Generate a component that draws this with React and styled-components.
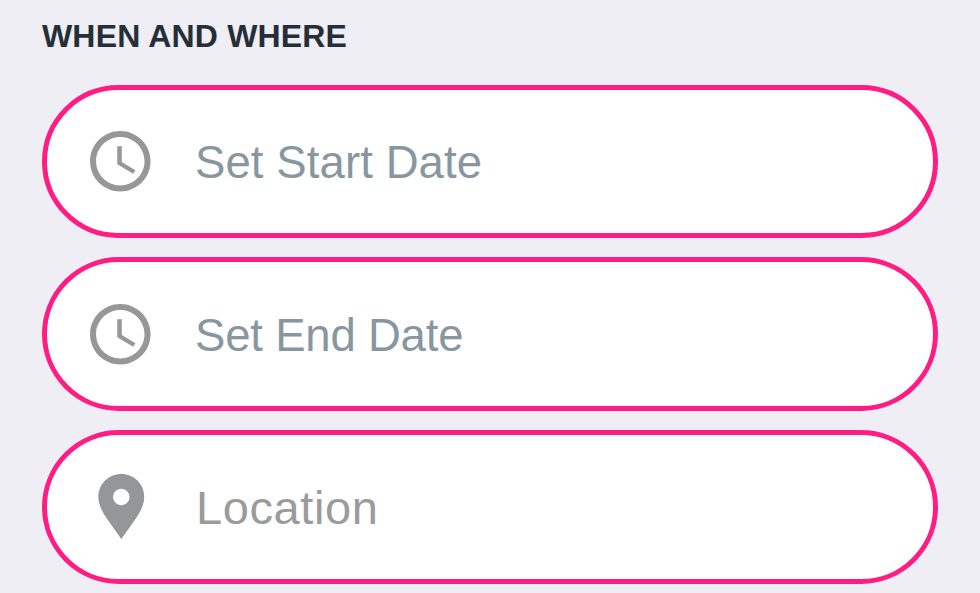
import React from 'react';
import styled, { createGlobalStyle } from 'styled-components';

const fields = [
  { label: 'Set Start Date', icon: 'clock', color: '#88979f', size: 45.5, spacing: 0.1 },
  { label: 'Set End Date', icon: 'clock', color: '#88979f', size: 45.5, spacing: -0.2 },
  { label: 'Location', icon: 'pin', color: '#9b9b9b', size: 47, spacing: 0.6 },
];

function ClockIcon() {
  return (
    <svg width="72.6" height="72.6" viewBox="0 0 24 24" fill="#979797">
      <path d="M11.99 2C6.47 2 2 6.48 2 12s4.47 10 9.99 10C17.52 22 22 17.52 22 12S17.52 2 11.99 2zM12 20c-4.42 0-8-3.58-8-8s3.58-8 8-8 8 3.58 8 8-3.58 8-8 8z" />
      <path d="M12.5 7H11v6l5.25 3.15.75-1.23-4.5-2.67z" />
    </svg>
  );
}

function PinIcon() {
  return (
    <svg width="78.6" height="78.6" viewBox="0 0 24 24" fill="#949697">
      <path d="M12 2.15C8.1 2.15 5 5.2 5 9.1C5 11.4 6 13.3 7.4 15.5L12 22L16.6 15.5C18 13.3 19 11.4 19 9.1C19 5.2 15.9 2.15 12 2.15zm0 9.5c-1.38 0-2.5-1.12-2.5-2.5s1.12-2.5 2.5-2.5 2.5 1.12 2.5 2.5-1.12 2.5-2.5 2.5z" />
    </svg>
  );
}

function App() {
  return (
    <>
      <GlobalStyle />
      <Section>
        <Heading>WHEN AND WHERE</Heading>
        <FieldList>
          {fields.map((field) => (
            <Field key={field.label} type="button">
              <IconSlot $pin={field.icon === 'pin'}>
                {field.icon === 'pin' ? <PinIcon /> : <ClockIcon />}
              </IconSlot>
              <Label $color={field.color} $size={field.size} $spacing={field.spacing}>
                {field.label}
              </Label>
            </Field>
          ))}
        </FieldList>
      </Section>
    </>
  );
}

const GlobalStyle = createGlobalStyle`
  body {
    margin: 0;
    background: #efeef5;
    overflow: hidden;
  }
  * {
    box-sizing: border-box;
  }
`;

const Section = styled.section`
  height: 593px;
  padding: 18px 42px 0;
  font-family: 'Liberation Sans', Arial, sans-serif;
`;

const Heading = styled.h2`
  margin: 0;
  height: 66.5px;
  color: #262f38;
  font-size: 32px;
  font-weight: bold;
  letter-spacing: 0.16px;
  line-height: 37px;
  white-space: nowrap;
`;

const FieldList = styled.div`
  display: flex;
  flex-direction: column;
  gap: 19px;
`;

const Field = styled.button`
  display: flex;
  align-items: center;
  width: 896px;
  height: 153.7px;
  padding: 0;
  border: 5px solid #ff1d84;
  border-radius: 77px;
  background: #fff;
  font-family: inherit;
  text-align: left;
`;

const IconSlot = styled.span`
  display: flex;
  flex: none;
  justify-content: center;
  width: ${(props) => (props.$pin ? '149px' : '147px')};
  margin-right: ${(props) => (props.$pin ? '0' : '1px')};
`;

const Label = styled.span`
  padding-top: 3px;
  color: ${(props) => props.$color};
  font-size: ${(props) => props.$size}px;
  letter-spacing: ${(props) => props.$spacing}px;
  line-height: 54px;
  white-space: nowrap;
`;

export default App;
